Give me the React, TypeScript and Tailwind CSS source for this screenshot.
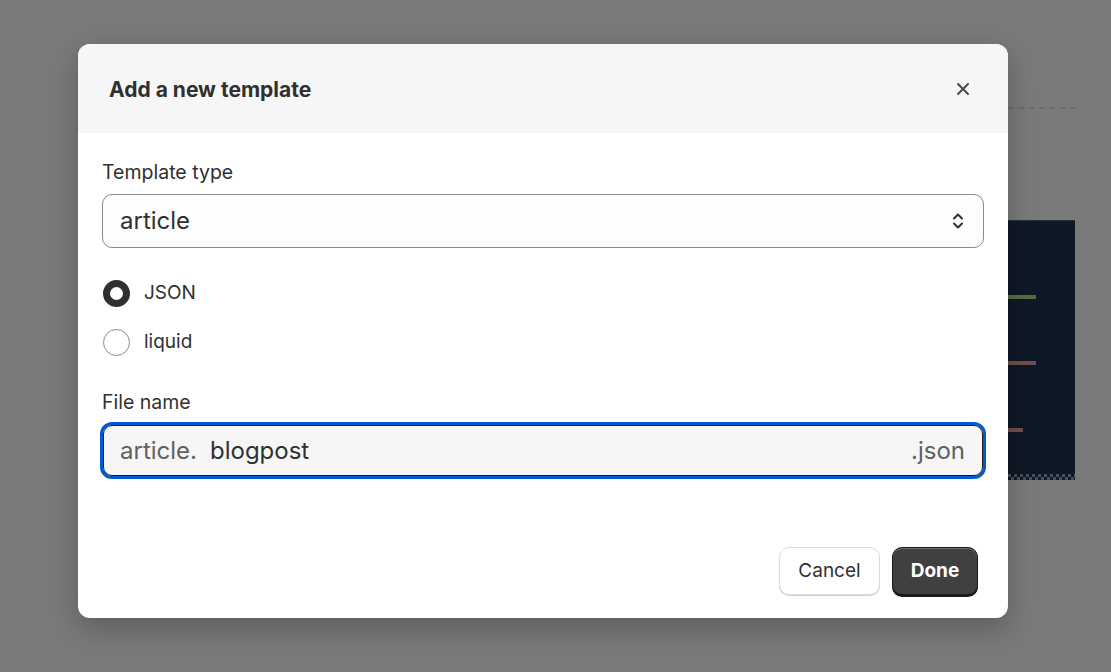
import React from 'react';

const App: React.FC = () => {
  return (
    <div
      className="relative w-[1111px] h-[672px] overflow-hidden bg-[#7a7a7a]"
      style={{ fontFamily: 'Inter, "Noto Sans", sans-serif' }}
    >
      {/* Page content behind the overlay */}
      <div className="absolute left-[1008px] top-[107px] w-[68px] border-t-2 border-dashed border-[#6c6c6c]" />
      <div className="absolute left-[1008px] top-[220px] w-[67px] h-[260px] bg-[#0f1826] border-t border-[#2a323d]">
        <div className="absolute left-0 top-[74px] w-[28px] h-[4px] bg-[#5a6d3f]" />
        <div className="absolute left-0 top-[140px] w-[28px] h-[4px] bg-[#73504a]" />
        <div className="absolute left-0 top-[207px] w-[15px] h-[4px] bg-[#73504a]" />
        <div
          className="absolute left-0 bottom-0 w-full h-[6px]"
          style={{
            backgroundImage:
              'repeating-linear-gradient(90deg, #4a4f57 0 3px, #0f1826 3px 6px), repeating-linear-gradient(90deg, #0f1826 0 3px, #4a4f57 3px 6px)',
            backgroundSize: '100% 3px, 100% 3px',
            backgroundPosition: '0 0, 0 3px',
            backgroundRepeat: 'no-repeat',
          }}
        />
      </div>

      {/* Modal */}
      <div className="absolute left-[78px] top-[44px] w-[930px] h-[574px] bg-white rounded-[12px] overflow-hidden shadow-[0_10px_30px_rgba(0,0,0,0.25)] flex flex-col">
        <div className="h-[89px] bg-[#f6f6f6] flex items-center justify-between pl-[31px] pr-[33px] shrink-0">
          <h2 className="text-[21px] font-bold text-[#303030] mt-[2px]">Add a new template</h2>
          <button className="w-[24px] h-[24px] flex items-center justify-center text-[#4a4a4a]">
            <svg width="14" height="14" viewBox="0 0 14 14" fill="none">
              <path d="M2 2L12 12M12 2L2 12" stroke="currentColor" strokeWidth="2" strokeLinecap="round" />
            </svg>
          </button>
        </div>

        <div className="flex flex-col px-[24px] pt-[26px] flex-1">
          <label className="text-[19.5px] leading-[26px] text-[#303030]">Template type</label>
          <div className="mt-[9px] h-[54px] rounded-[10px] border border-[#8a8a8a] bg-[#fdfdfd] flex items-center justify-between pl-[17px] pr-[18px]">
            <span className="text-[24px] text-[#303030]">article</span>
            <svg width="14" height="20" viewBox="0 0 14 20" fill="none" className="text-[#303030]">
              <path d="M3 7.5L7 3.5L11 7.5M3 12.5L7 16.5L11 12.5" stroke="currentColor" strokeWidth="2" strokeLinecap="round" strokeLinejoin="round" />
            </svg>
          </div>

          <div className="mt-[31px] flex items-center gap-[14px] h-[28px]">
            <span className="w-[27px] h-[27px] rounded-full border-[7px] border-[#303030] bg-white ml-[1px]" />
            <span className="text-[19px] text-[#303030]">JSON</span>
          </div>
          <div className="mt-[21px] flex items-center gap-[14px] h-[28px]">
            <span className="w-[27px] h-[27px] rounded-full border border-[#8a8a8a] bg-white ml-[1px]" />
            <span className="text-[19px] text-[#303030]">liquid</span>
          </div>

          <label className="mt-[33px] text-[19.5px] leading-[26px] text-[#303030]">File name</label>
          <div className="mt-[7px] -mx-[2px] h-[57px] rounded-[12px] border-[3px] border-[#005bd3] p-0">
            <div className="h-full rounded-[9px] border border-[#1a1a1a] bg-[#f6f6f6] flex items-center justify-between pl-[16px] pr-[17px]">
              <div className="text-[24px]">
                <span className="text-[#616161]">article.</span>
                <span className="ml-[13px] text-[#303030]">blogpost</span>
              </div>
              <span className="text-[24px] text-[#616161]">.json</span>
            </div>
          </div>

          <div className="mt-auto mb-[23px] flex justify-end gap-[12px] pr-[6px]">
            <button className="h-[48px] w-[101px] rounded-[10px] bg-white border border-[#dcdcdc] shadow-[0_1px_0_#d0d0d0] text-[19px] text-[#303030]">
              Cancel
            </button>
            <button className="h-[48px] w-[86px] rounded-[10px] bg-[#404040] border border-[#1a1a1a] shadow-[inset_0_1px_0_rgba(255,255,255,0.25),0_2px_0_#1a1a1a] text-[19px] font-bold text-white">
              Done
            </button>
          </div>
        </div>
      </div>
    </div>
  );
};

export default App;
